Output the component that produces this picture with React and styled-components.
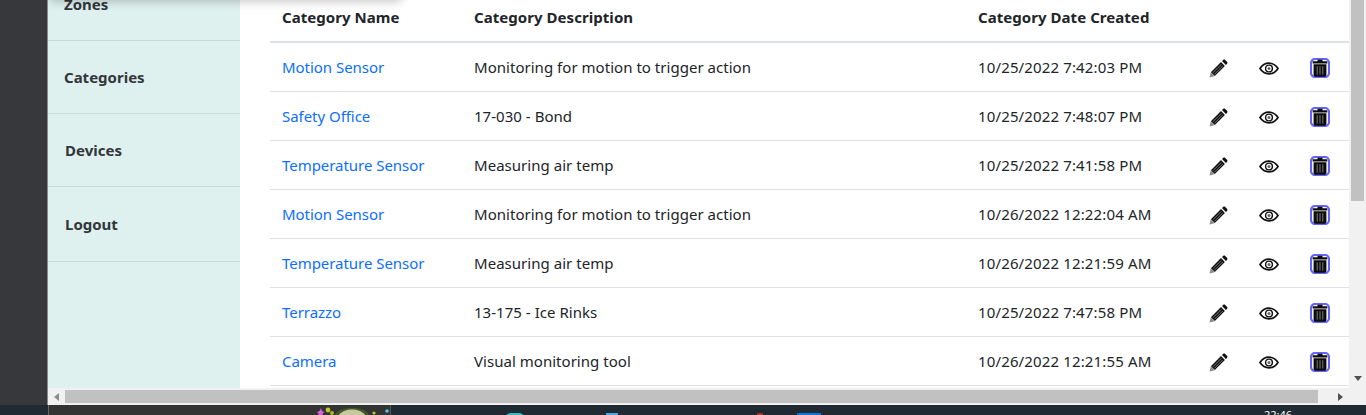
import React from "react";
import styled, { createGlobalStyle } from "styled-components";

const GlobalStyle = createGlobalStyle`
  html, body {
    margin: 0;
    padding: 0;
    height: 415px;
    overflow: hidden;
    background: #36383c;
    font-family: "Noto Sans", "Open Sans", sans-serif;
  }
`;

const Screen = styled.div`
  width: 1366px;
  height: 415px;
  display: flex;
  flex-direction: column;
  overflow: hidden;
`;

const Window = styled.div`
  height: 405px;
  display: flex;
  background: #36383c;
`;

const Gutter = styled.div`
  width: 47px;
  flex-shrink: 0;
`;

const Page = styled.div`
  flex: 1;
  display: flex;
  flex-direction: column;
  border-left: 1px solid #8a8a8a;
  min-width: 0;
`;

const Content = styled.div`
  position: relative;
  height: 388px;
  display: flex;
  background: #fff;
  overflow: hidden;
`;

const TopShadow = styled.div`
  position: absolute;
  left: 0;
  top: -24px;
  width: 355px;
  height: 24px;
  border-radius: 8px;
  box-shadow: 0 2px 10px rgba(0, 0, 0, 0.22);
`;

const Sidebar = styled.nav`
  width: 192px;
  flex-shrink: 0;
  margin-top: -32px;
  background: #def1ef;
  color: #33363b;
  font-size: 15px;
  font-weight: 700;
`;

const NavItem = styled.div`
  height: ${(props) => props.$height}px;
  padding-left: ${(props) => props.$indent}px;
  display: flex;
  align-items: center;
  box-sizing: border-box;
  border-bottom: 1px solid #c5dcda;
`;

const Main = styled.main`
  flex: 1;
  padding: 0 0 0 30px;
  min-width: 0;
`;

const Table = styled.table`
  width: 1079px;
  border-collapse: collapse;
  font-size: 15px;
  color: #212529;
  table-layout: fixed;
`;

const Head = styled.th`
  height: 42px;
  padding: 0 0 7px 12px;
  text-align: left;
  font-weight: 700;
  letter-spacing: 0.05px;
  border-bottom: 2px solid #dee2e6;
  box-sizing: border-box;
`;

const Row = styled.tr`
  height: 49px;
  border-bottom: 1px solid #dee2e6;
`;

const Cell = styled.td`
  padding: 0 0 0 12px;
  white-space: nowrap;
  letter-spacing: ${(props) => props.$spacing || 0}px;
`;

const NameLink = styled.a`
  color: #0d6efd;
  text-decoration: none;
`;

const IconCell = styled.td`
  padding: 0;
  vertical-align: middle;
`;

const IconSlot = styled.div`
  display: flex;
  align-items: center;
  justify-content: center;
  margin-top: ${(props) => props.$drop}px;
`;

const HScroll = styled.div`
  height: 17px;
  display: flex;
  align-items: center;
  background: #f1f1f1;
`;

const Arrow = styled.span`
  width: 0;
  height: 0;
  border-top: 4px solid transparent;
  border-bottom: 4px solid transparent;
  border-right: ${(props) => (props.$right ? "none" : "5px solid #8c8c8c")};
  border-left: ${(props) => (props.$right ? "5px solid #505050" : "none")};
  margin: ${(props) => (props.$right ? "0 6px 0 5px" : "0 5px 0 6px")};
`;

const HTrack = styled.div`
  flex: 1;
  height: 13px;
  display: flex;
`;

const HThumb = styled.div`
  width: 1253px;
  margin-left: 1px;
  background: #c1c1c1;
`;

const VScroll = styled.div`
  width: 17px;
  flex-shrink: 0;
  height: 388px;
  display: flex;
  flex-direction: column;
  align-items: center;
  background: #f1f1f1;
`;

const VThumb = styled.div`
  width: 13px;
  height: 201px;
  background: #c1c1c1;
`;

const VArrowWrap = styled.div`
  margin-top: auto;
  height: 19px;
  display: flex;
  align-items: center;
  justify-content: center;
`;

const DownArrow = styled.span`
  width: 0;
  height: 0;
  border-left: 4px solid transparent;
  border-right: 4px solid transparent;
  border-top: 5px solid #505050;
`;

const Corner = styled.div`
  width: 17px;
  height: 17px;
  background: #f1f1f1;
`;

const Taskbar = styled.div`
  position: relative;
  height: 10px;
  background: #202a32;
  overflow: hidden;
`;

const Wallpaper = styled.div`
  position: absolute;
  left: 48px;
  top: 0;
  width: 343px;
  height: 10px;
  background: #333;
  border-left: 1px solid #666;
  border-right: 1px solid #555;
  box-sizing: border-box;
`;

const WallpaperArt = styled.svg`
  position: absolute;
  left: 315px;
  top: 0;
`;

const Clock = styled.span`
  position: absolute;
  left: 1264px;
  top: 3px;
  font-size: 11px;
  line-height: 14px;
  color: #fff;
`;

const Blip = styled.span`
  position: absolute;
  left: ${(props) => props.$left}px;
  top: 8px;
  width: ${(props) => props.$width}px;
  height: 12px;
  background: ${(props) => props.$color};
  border-radius: ${(props) => props.$radius || 0}px;
`;

const NAV = [
  { label: "Zones", height: 73, indent: 16 },
  { label: "Categories", height: 73, indent: 16 },
  { label: "Devices", height: 73, indent: 17 },
  { label: "Logout", height: 75, indent: 17 },
];

const ROWS = [
  ["Motion Sensor", "Monitoring for motion to trigger action", "10/25/2022 7:42:03 PM"],
  ["Safety Office", "17-030 - Bond", "10/25/2022 7:48:07 PM"],
  ["Temperature Sensor", "Measuring air temp", "10/25/2022 7:41:58 PM"],
  ["Motion Sensor", "Monitoring for motion to trigger action", "10/26/2022 12:22:04 AM"],
  ["Temperature Sensor", "Measuring air temp", "10/26/2022 12:21:59 AM"],
  ["Terrazzo", "13-175 - Ice Rinks", "10/25/2022 7:47:58 PM"],
  ["Camera", "Visual monitoring tool", "10/26/2022 12:21:55 AM"],
];

function PencilIcon() {
  return (
    <svg width="20" height="20" viewBox="0 0 20 20">
      <path fill="#8a8a8a" d="M1.500 18.500l1.200-5 3.800 3.800z" />
      <path fill="#111" d="M2.900 13.200L13 3.100l3.900 3.900L6.800 17.100z" />
      <path fill="#111" d="M14 2.100l1.100-1.100c.6-.6 1.500-.6 2.100 0l1.800 1.800c.6.6.6 1.500 0 2.100L17.900 6z" />
      <path stroke="#fff" strokeWidth="0.8" d="M5 13.700l8.300-8.300M6.500 15.200l8.300-8.300" opacity="0.55" />
    </svg>
  );
}

function EyeIcon() {
  return (
    <svg width="20" height="13" viewBox="0 0 20 13" fill="none" stroke="#111">
      <path strokeWidth="1.700" d="M1 6.500C3.200 3 6.300 1.200 10 1.200s6.800 1.800 9 5.300c-2.200 3.500-5.300 5.300-9 5.300S3.200 10 1 6.500z" />
      <circle cx="10" cy="6.500" r="3.400" strokeWidth="1.400" />
      <circle cx="10" cy="6.500" r="1.500" fill="#666" stroke="none" />
    </svg>
  );
}

function TrashIcon() {
  return (
    <svg width="20" height="20" viewBox="0 0 20 20">
      <rect x="1" y="1" width="18" height="18" rx="4" fill="#fff" stroke="#6464f8" strokeWidth="2.200" />
      <path fill="#0c0c0c" d="M7.500 1.800h5v1.400h4.800v2.300H2.700V3.200h4.800z" />
      <path fill="#0c0c0c" d="M3.600 6.200h12.800v10.900c0 .9-.7 1.600-1.600 1.600H5.200c-.9 0-1.600-.7-1.600-1.600z" />
      <path stroke="#8a8a8a" strokeWidth="0.900" d="M7.200 8.200v8.400M10 8.200v8.400M12.800 8.200v8.400" />
    </svg>
  );
}

export default function App() {
  return (
    <Screen>
      <GlobalStyle />
      <Window>
        <Gutter />
        <Page>
          <Content>
            <Sidebar>
              {NAV.map((item) => (
                <NavItem key={item.label} $height={item.height} $indent={item.indent}>
                  {item.label}
                </NavItem>
              ))}
            </Sidebar>
            <Main>
              <Table>
                <colgroup>
                  <col width="192" />
                  <col width="504" />
                  <col width="222" />
                  <col width="60" />
                  <col width="42" />
                  <col width="59" />
                </colgroup>
                <thead>
                  <tr>
                    <Head>Category Name</Head>
                    <Head>Category Description</Head>
                    <Head>Category Date Created</Head>
                    <Head />
                    <Head />
                    <Head />
                  </tr>
                </thead>
                <tbody>
                  {ROWS.map((row, i) => (
                    <Row key={i}>
                      <Cell $spacing={-0.04}><NameLink href="#">{row[0]}</NameLink></Cell>
                      <Cell $spacing={0.03}>{row[1]}</Cell>
                      <Cell $spacing={0.14}>{row[2]}</Cell>
                      <IconCell><IconSlot $drop={4}><PencilIcon /></IconSlot></IconCell>
                      <IconCell><IconSlot $drop={4}><EyeIcon /></IconSlot></IconCell>
                      <IconCell><IconSlot $drop={3}><TrashIcon /></IconSlot></IconCell>
                    </Row>
                  ))}
                </tbody>
              </Table>
            </Main>
            <VScroll>
              <VThumb />
              <VArrowWrap><DownArrow /></VArrowWrap>
            </VScroll>
            <TopShadow />
          </Content>
          <HScroll>
            <Arrow />
            <HTrack><HThumb /></HTrack>
            <Arrow $right />
            <Corner />
          </HScroll>
        </Page>
      </Window>
      <Taskbar>
        <Wallpaper />
        <WallpaperArt width="76" height="10" viewBox="0 0 76 10">
          <path fill="#e060e0" d="M2 7l2.500-1 1.500-3 1 3 2.500 1-2 1.500V10H3.500V8.500z" />
          <circle cx="13" cy="5" r="2.400" fill="#b8c830" />
          <circle cx="17" cy="8" r="2" fill="#a8b828" />
          <path fill="#3e5a24" d="M20 10c3-5.500 9-7 17-7s14 1.500 17 7z" />
          <path fill="#c8c8a0" d="M24 10c3-4 8-5.500 13-5.500S47 6 50 10z" />
          <circle cx="59" cy="8" r="1.600" fill="#b8c830" />
          <circle cx="72" cy="6" r="1.800" fill="#48c8e0" />
        </WallpaperArt>
        <Blip $left={505} $width={20} $color="#2fc4c4" $radius={10} />
        <Blip $left={606} $width={12} $color="#4aa8e0" />
        <Blip $left={757} $width={6} $color="#a03c1c" />
        <Blip $left={797} $width={24} $color="#0a78d8" />
        <Clock>22:46</Clock>
      </Taskbar>
    </Screen>
  );
}
